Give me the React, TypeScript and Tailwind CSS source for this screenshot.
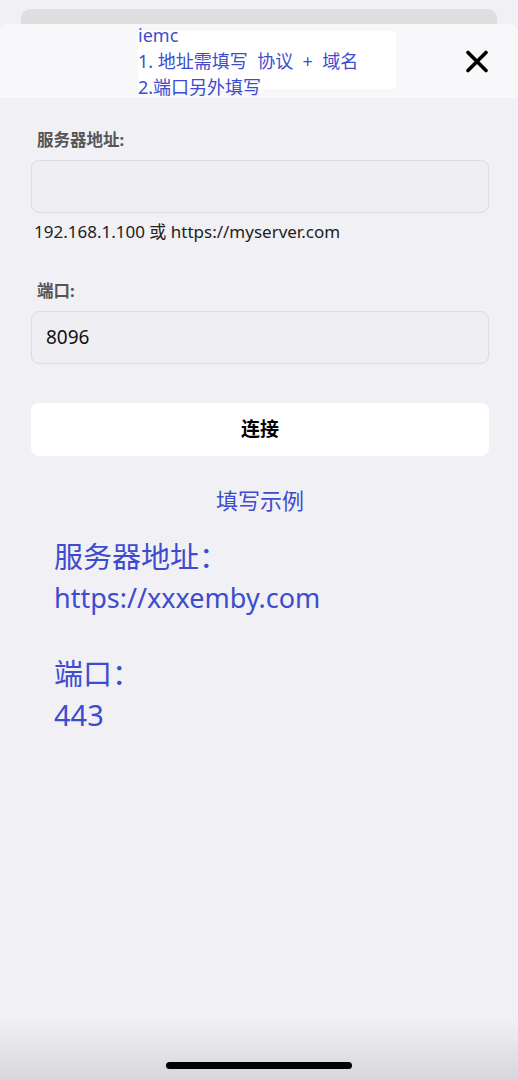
import React from 'react'

const font = { fontFamily: '"Noto Sans", "Noto Sans CJK SC", sans-serif' }

function CloseIcon() {
  return (
    <svg width="24" height="23" viewBox="0 0 24 23" fill="none">
      <path d="M3 2.5L21 20.5M21 2.5L3 20.5" stroke="#000" strokeWidth="3.6" strokeLinecap="round" />
    </svg>
  )
}

function Field({ label, value }: { label: string; value?: string }) {
  return (
    <div className="flex flex-col">
      <div className="pl-[6px] text-[16.5px] leading-[20px] font-bold text-[#555]">{label}</div>
      <div className="mt-[10px] flex h-[53px] items-center rounded-[8px] border border-[#dcdbe0] bg-[#efeef3] px-[14px] text-[19px] text-[#111]">
        {value}
      </div>
    </div>
  )
}

export default function App() {
  return (
    <div className="flex h-[1080px] w-[518px] flex-col overflow-hidden bg-[#f1f0f5]" style={font}>
      <div className="h-[9px]" />
      <div className="mx-[21px] h-[15px] rounded-t-[9px] bg-[#dfdfdf]" />
      <div className="relative h-[74px] overflow-hidden rounded-t-[9px] bg-[#f8f8fa]">
        <div className="ml-[138px] mt-[7px] flex h-[58px] w-[258px] flex-col bg-white">
          <div className="-mt-[9px] text-[18px] leading-[26px] whitespace-nowrap text-[#3d4ccf]">
            <div>iemc</div>
            <div>1. 地址需填写&nbsp; 协议 &nbsp;+ &nbsp;域名</div>
            <div>2.端口另外填写</div>
          </div>
        </div>
        <button className="absolute top-[26px] right-[29px]">
          <CloseIcon />
        </button>
      </div>

      <div className="flex flex-col pt-[32px] pr-[29px] pl-[31px]">
        <Field label="服务器地址:" />
        <div className="mt-[9px] pl-[3px] text-[17px] leading-[20px] text-[#222]">
          192.168.1.100 或 https://myserver.com
        </div>
        <div className="mt-[39px]">
          <Field label="端口:" value="8096" />
        </div>
        <button className="mt-[39px] h-[53px] rounded-[8px] bg-white text-[19px] font-bold text-black">
          连接
        </button>
        <div className="mt-[30px] text-center text-[22px] leading-[28px] text-[#3d4ccf]">填写示例</div>
      </div>

      <div className="mt-[22px] flex flex-col px-[54px] leading-[41px] text-[#3d4ccf]">
        <div className="text-[29px]">服务器地址：</div>
        <div className="text-[27px]">https://xxxemby.com</div>
        <div className="h-[35px]" />
        <div className="text-[29px]">端口：</div>
        <div className="text-[29px]">443</div>
      </div>

      <div className="mt-auto flex h-[62px] items-end justify-center bg-gradient-to-b from-[#f1f0f5] to-[#d7d6db] pb-[11px]">
        <div className="h-[7px] w-[186px] rounded-full bg-black" />
      </div>
    </div>
  )
}
